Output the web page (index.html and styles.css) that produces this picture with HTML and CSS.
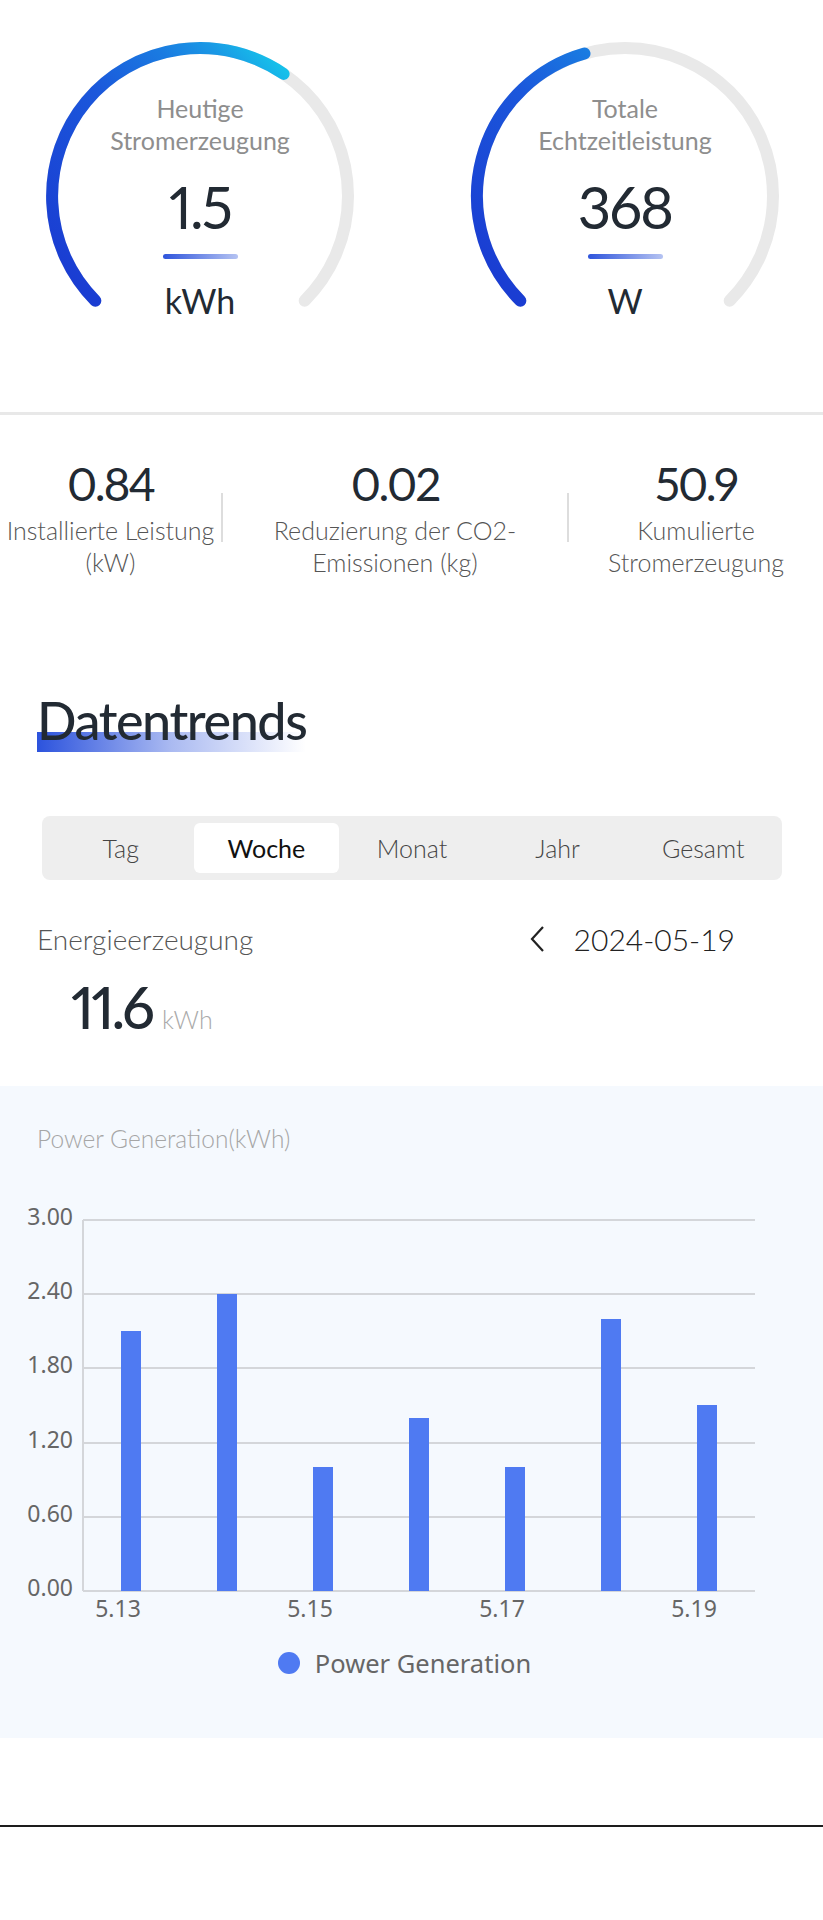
FILE: index.html
```html
<!DOCTYPE html>
<html lang="de">
<head>
    <meta charset="UTF-8">
    <meta name="viewport" content="width=device-width, initial-scale=1.0">
    <title>Anlagenübersicht</title>
    <link rel="stylesheet" href="styles.css">
</head>
<body>
    <!-- Gauges -->
    <div class="gauges">
        <div class="gauge">
            <svg class="gauge-ring" width="320" height="320" viewBox="0 0 320 320">
                <defs>
                    <linearGradient id="arc-fill" gradientUnits="userSpaceOnUse" x1="55" y1="265" x2="265" y2="55">
                        <stop offset="0" stop-color="#1a3dd2"/>
                        <stop offset="0.5" stop-color="#1b57db"/>
                        <stop offset="0.75" stop-color="#1a7be1"/>
                        <stop offset="0.88" stop-color="#1a98e5"/>
                        <stop offset="1" stop-color="#16c0ea"/>
                    </linearGradient>
                </defs>
                <path class="track" d="M55.35 264.65 A148 148 0 1 1 264.65 264.65"/>
                <path class="progress" stroke="url(#arc-fill)" d="M55.35 264.65 A148 148 0 0 1 243.6 37.9"/>
            </svg>
            <div class="gauge-text">
                <div class="gauge-label">Heutige<br>Stromerzeugung</div>
                <div class="gauge-value">1.5</div>
                <div class="gauge-bar"></div>
                <div class="gauge-unit">kWh</div>
            </div>
        </div>
        <div class="gauge">
            <svg class="gauge-ring" width="320" height="320" viewBox="0 0 320 320">
                <path class="track" d="M55.35 264.65 A148 148 0 1 1 264.65 264.65"/>
                <path class="progress" stroke="url(#arc-fill)" d="M55.35 264.65 A148 148 0 0 1 119.5 17.6"/>
            </svg>
            <div class="gauge-text">
                <div class="gauge-label">Totale<br>Echtzeitleistung</div>
                <div class="gauge-value">368</div>
                <div class="gauge-bar"></div>
                <div class="gauge-unit">W</div>
            </div>
        </div>
    </div>

    <!-- Key figures -->
    <div class="stats">
        <div class="stat">
            <div class="stat-value">0.84</div>
            <div class="stat-label">Installierte Leistung<br>(kW)</div>
        </div>
        <div class="divider"></div>
        <div class="stat">
            <div class="stat-value">0.02</div>
            <div class="stat-label">Reduzierung der CO2-<br>Emissionen (kg)</div>
        </div>
        <div class="divider"></div>
        <div class="stat">
            <div class="stat-value">50.9</div>
            <div class="stat-label">Kumulierte<br>Stromerzeugung</div>
        </div>
    </div>

    <!-- Trends -->
    <div class="title-wrap">
        <h2 class="section-title">Datentrends</h2>
    </div>

    <div class="tabs">
        <div class="tab">Tag</div>
        <div class="tab active">Woche</div>
        <div class="tab">Monat</div>
        <div class="tab">Jahr</div>
        <div class="tab">Gesamt</div>
    </div>

    <div class="energy-head">
        <div class="energy-label">Energieerzeugung</div>
        <div class="date-nav">
            <svg class="chevron" width="18" height="28" viewBox="0 0 18 28">
                <path d="M15 2 L4 14 L15 26" fill="none" stroke="#222" stroke-width="2.2"/>
            </svg>
            <span>2024-05-19</span>
        </div>
    </div>

    <div class="energy-total">
        <span class="energy-value">11.6</span>
        <span class="energy-unit">kWh</span>
    </div>

    <div class="chart-card">
        <div class="chart-title">Power Generation(kWh)</div>
        <svg class="chart" width="823" height="470" viewBox="0 0 823 470">
            <g class="grid">
                <line x1="83" y1="66" x2="755" y2="66"/>
                <line x1="83" y1="140" x2="755" y2="140"/>
                <line x1="83" y1="214" x2="755" y2="214"/>
                <line x1="83" y1="289" x2="755" y2="289"/>
                <line x1="83" y1="363" x2="755" y2="363"/>
                <line x1="83" y1="437" x2="755" y2="437"/>
                <line x1="83" y1="66" x2="83" y2="437"/>
            </g>
            <g class="axis-label" text-anchor="end">
                <text x="73" y="71">3.00</text>
                <text x="73" y="145">2.40</text>
                <text x="73" y="219">1.80</text>
                <text x="73" y="294">1.20</text>
                <text x="73" y="368">0.60</text>
                <text x="73" y="442">0.00</text>
            </g>
            <g class="bars">
                <rect x="121" y="177" width="20" height="260"/>
                <rect x="217" y="140" width="20" height="297"/>
                <rect x="313" y="313" width="20" height="124"/>
                <rect x="409" y="264" width="20" height="173"/>
                <rect x="505" y="313" width="20" height="124"/>
                <rect x="601" y="165" width="20" height="272"/>
                <rect x="697" y="251" width="20" height="186"/>
            </g>
            <g class="axis-label" text-anchor="middle">
                <text x="118" y="463">5.13</text>
                <text x="310" y="463">5.15</text>
                <text x="502" y="463">5.17</text>
                <text x="694" y="463">5.19</text>
            </g>
        </svg>
        <div class="legend">
            <span class="legend-dot"></span>
            <span class="legend-text">Power Generation</span>
        </div>
    </div>

    <div class="footer-line"></div>
</body>
</html>
```

FILE: styles.css
```css
body {
    margin: 0;
    font-family: Lato, "Noto Sans", sans-serif;
    color: #222a33;
    background: #fff;
}

/* gauges */
.gauges {
    display: flex;
    justify-content: space-between;
    height: 415px;
    box-sizing: border-box;
    padding: 36px 38px 0 40px;
    border-bottom: 3px solid #e8e8e8;
}
.gauge {
    position: relative;
    width: 320px;
    height: 320px;
}
.gauge-ring {
    display: block;
}
.track {
    fill: none;
    stroke: #e9e9e9;
    stroke-width: 12;
    stroke-linecap: round;
}
.progress {
    fill: none;
    stroke-width: 12;
    stroke-linecap: round;
}
.gauge-text {
    position: absolute;
    inset: 0;
    display: flex;
    flex-direction: column;
    align-items: center;
    padding-top: 56px;
}
.gauge-label {
    font-size: 25px;
    line-height: 32px;
    color: #8e8e8e;
    text-align: center;
}
.gauge-value {
    margin-top: 19px;
    font-size: 58px;
    line-height: 64px;
    letter-spacing: -2px;
    font-feature-settings: "pnum";
}
.gauge-bar {
    width: 75px;
    height: 5px;
    margin-top: 15px;
    border-radius: 3px;
    background: linear-gradient(90deg, #2f55dc, #b5c3f2);
}
.gauge-unit {
    margin-top: 22px;
    font-size: 34px;
    line-height: 40px;
}

/* key figures */
.stats {
    display: grid;
    grid-template-columns: 221px 2px 344px 2px 1fr;
    padding-top: 43px;
    text-align: center;
}
.stat-value {
    font-size: 46px;
    line-height: 52px;
    letter-spacing: -2px;
    font-feature-settings: "pnum";
}
.stat-label {
    margin-top: 4px;
    font-size: 25px;
    line-height: 32px;
    font-weight: 300;
    color: #555;
}
.divider {
    width: 2px;
    height: 49px;
    margin-top: 35px;
    background: #ddd;
}

/* trends */
.title-wrap {
    display: flex;
    padding: 112px 0 0 37px;
}
.section-title {
    position: relative;
    z-index: 0;
    margin: 0;
    font-size: 52px;
    line-height: 60px;
    font-weight: 500;
    letter-spacing: -1.4px;
}
.section-title::before {
    content: "";
    position: absolute;
    left: 0;
    right: 0;
    top: 42px;
    height: 20px;
    z-index: -1;
    background: linear-gradient(90deg, #2c53dd 0%, rgba(44, 83, 221, 0.4) 50%, rgba(44, 83, 221, 0) 100%);
}

.tabs {
    display: grid;
    grid-template-columns: repeat(5, 1fr);
    margin: 66px 41px 0 42px;
    padding: 7px 6px;
    background: #eee;
    border-radius: 8px;
}
.tab {
    height: 50px;
    line-height: 50px;
    text-align: center;
    font-size: 25px;
    font-weight: 300;
    color: #444;
    border-radius: 6px;
}
.tab.active {
    background: #fff;
    color: #111;
    font-weight: 400;
}

.energy-head {
    display: flex;
    justify-content: space-between;
    align-items: center;
    margin: 42px 88px 0 37px;
}
.energy-label {
    font-size: 28px;
    line-height: 34px;
    font-weight: 300;
    color: #555;
}
.date-nav {
    display: flex;
    align-items: center;
    gap: 28px;
    font-size: 30px;
    line-height: 34px;
    font-weight: 300;
    color: #222;
}
.chevron {
    display: block;
}

.energy-total {
    display: flex;
    align-items: baseline;
    gap: 10px;
    margin: 19px 0 0 71px;
}
.energy-value {
    font-size: 58px;
    line-height: 64px;
    font-weight: 500;
    letter-spacing: -3px;
    font-feature-settings: "pnum";
}
.energy-unit {
    font-size: 25px;
    font-weight: 300;
    color: #aaa;
}

/* chart */
.chart-card {
    height: 652px;
    box-sizing: border-box;
    margin-top: 47px;
    padding-top: 38px;
    background: #f5f9fe;
}
.chart-title {
    margin-left: 37px;
    font-size: 24.5px;
    line-height: 30px;
    font-weight: 300;
    color: #a6a6a6;
}
.chart {
    display: block;
}
.grid line {
    stroke: #d4d6da;
    stroke-width: 2;
}
.bars rect {
    fill: #4f7af2;
}
.axis-label {
    font-family: "Noto Sans", sans-serif;
    font-size: 23px;
    fill: #666;
}
.legend {
    display: flex;
    justify-content: center;
    align-items: center;
    gap: 15px;
    margin-top: 24px;
    padding-right: 14px;
}
.legend-dot {
    width: 22px;
    height: 22px;
    border-radius: 50%;
    background: #4f7af2;
}
.legend-text {
    font-family: "Noto Sans", sans-serif;
    font-size: 25.5px;
    line-height: 30px;
    color: #666;
}

.footer-line {
    margin-top: 87px;
    border-top: 2px solid #1d1d1d;
}
```
